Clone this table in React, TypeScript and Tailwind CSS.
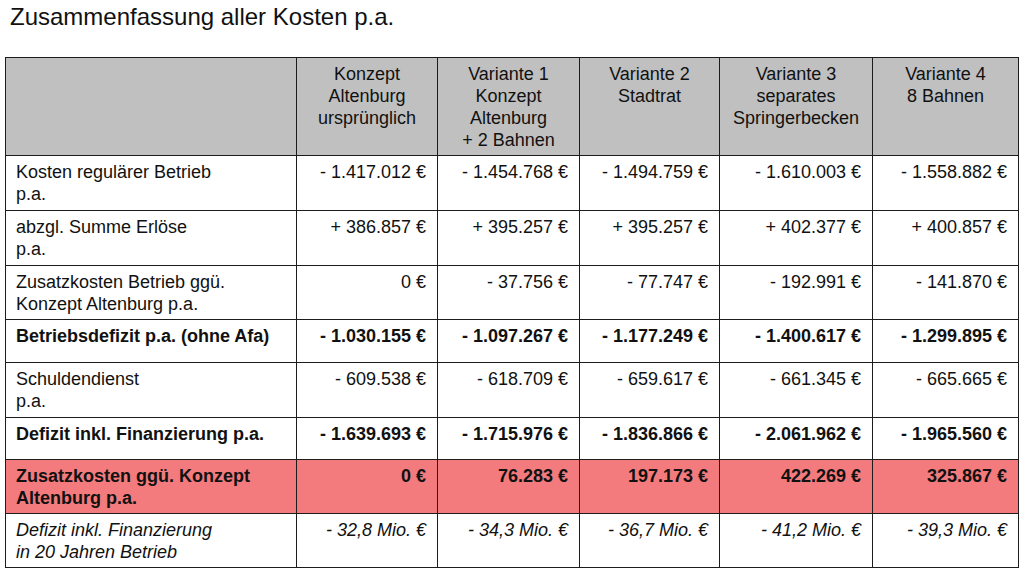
const cols = ['w-[291px]', 'w-[141px]', 'w-[142px]', 'w-[140px]', 'w-[153px]', 'w-[146px]'];

type Row = {
  label: React.ReactNode;
  values: string[];
  h: string;
  kind?: 'bold' | 'pink' | 'italic';
};

const rows: Row[] = [
  {
    label: <>Kosten regulärer Betrieb<br />p.a.</>,
    values: ['- 1.417.012 €', '- 1.454.768 €', '- 1.494.759 €', '- 1.610.003 €', '- 1.558.882 €'],
    h: 'h-[55px]',
  },
  {
    label: <>abzgl. Summe Erlöse<br />p.a.</>,
    values: ['+ 386.857 €', '+ 395.257 €', '+ 395.257 €', '+ 402.377 €', '+ 400.857 €'],
    h: 'h-[55px]',
  },
  {
    label: <>Zusatzkosten Betrieb ggü.<br />Konzept Altenburg p.a.</>,
    values: ['0 €', '- 37.756 €', '- 77.747 €', '- 192.991 €', '- 141.870 €'],
    h: 'h-[54px]',
  },
  {
    label: 'Betriebsdefizit p.a. (ohne Afa)',
    values: ['- 1.030.155 €', '- 1.097.267 €', '- 1.177.249 €', '- 1.400.617 €', '- 1.299.895 €'],
    h: 'h-[43px]',
    kind: 'bold',
  },
  {
    label: <>Schuldendienst<br />p.a.</>,
    values: ['- 609.538 €', '- 618.709 €', '- 659.617 €', '- 661.345 €', '- 665.665 €'],
    h: 'h-[55px]',
  },
  {
    label: 'Defizit inkl. Finanzierung p.a.',
    values: ['- 1.639.693 €', '- 1.715.976 €', '- 1.836.866 €', '- 2.061.962 €', '- 1.965.560 €'],
    h: 'h-[42px]',
    kind: 'bold',
  },
  {
    label: <>Zusatzkosten ggü. Konzept<br />Altenburg p.a.</>,
    values: ['0 €', '76.283 €', '197.173 €', '422.269 €', '325.867 €'],
    h: 'h-[54px]',
    kind: 'pink',
  },
  {
    label: <>Defizit inkl. Finanzierung<br />in 20 Jahren Betrieb</>,
    values: ['- 32,8 Mio. €', '- 34,3 Mio. €', '- 36,7 Mio. €', '- 41,2 Mio. €', '- 39,3 Mio. €'],
    h: 'h-[54px]',
    kind: 'italic',
  },
];

const headers = [
  <>Konzept<br />Altenburg<br />ursprünglich</>,
  <>Variante 1<br />Konzept<br />Altenburg<br />+ 2 Bahnen</>,
  <>Variante 2<br />Stadtrat</>,
  <>Variante 3<br />separates<br />Springerbecken</>,
  <>Variante 4<br />8 Bahnen</>,
];

export default function App() {
  const cell = 'border border-[#1c1c1c] align-top p-0';
  return (
    <div className="w-[1023px] h-[572px] bg-white text-[#111] font-['Liberation_Sans',Arial,sans-serif] overflow-hidden">
      <div className="h-[57px] pl-[10px] pt-[3px] text-[24px] leading-[28px]">
        Zusammenfassung aller Kosten p.a.
      </div>
      <table className="ml-[5px] border-collapse table-fixed w-[1013px] text-[18px] leading-[22px]">
        <colgroup>
          {cols.map((c, i) => (
            <col key={i} className={c} />
          ))}
        </colgroup>
        <thead>
          <tr className="bg-[#c0c0c0]">
            <th className={`${cell} h-[98px]`} />
            {headers.map((h, i) => (
              <th key={i} className={`${cell} font-normal text-center pt-[5px]`}>
                {h}
              </th>
            ))}
          </tr>
        </thead>
        <tbody>
          {rows.map((r, i) => {
            const bg = r.kind === 'pink' ? 'bg-[#f47b7d]' : 'bg-white';
            const weight = r.kind === 'bold' || r.kind === 'pink' ? 'font-bold' : 'font-normal';
            const style = r.kind === 'italic' ? 'italic' : '';
            return (
              <tr key={i} className={`${bg} ${weight} ${style}`}>
                <td className={`${cell} ${r.h} pl-[10px] pt-[5px]`}>{r.label}</td>
                {r.values.map((v, j) => (
                  <td key={j} className={`${cell} text-right pr-[11px] pt-[5px] whitespace-nowrap`}>
                    {v}
                  </td>
                ))}
              </tr>
            );
          })}
        </tbody>
      </table>
    </div>
  );
}
